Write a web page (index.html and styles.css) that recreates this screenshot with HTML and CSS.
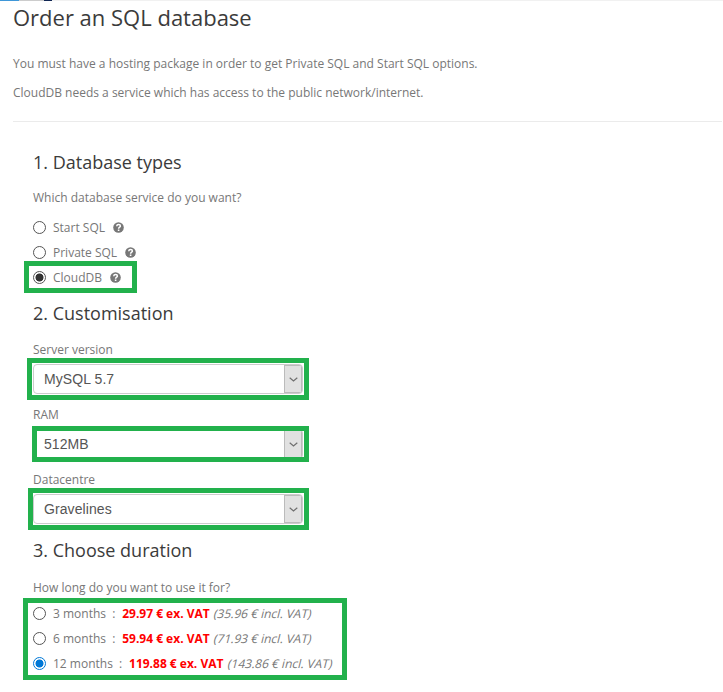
FILE: index.html
```html
<!DOCTYPE html>
<html lang="en">
<head>
<meta charset="utf-8">
<title>Order an SQL database</title>
<link rel="stylesheet" href="styles.css">
</head>
<body>
<div class="topbar"><span class="tab-blue"></span><span class="tab-grey"></span><span class="tab-navy"></span></div>
<svg width="0" height="0" class="defs">
  <symbol id="help" viewBox="0 0 11 11"><circle cx="5.5" cy="5.5" r="5.3" fill="#777"/><path d="M3.7 4.2C3.8 2.9 4.6 2.4 5.6 2.4C6.7 2.4 7.4 3.1 7.4 4C7.4 5.2 5.6 5.1 5.6 6.7" fill="none" stroke="#fff" stroke-width="1.5"/><path d="M4.8 7.5H6.4V9H4.8Z" fill="#fff"/></symbol>
  <symbol id="chevron" viewBox="0 0 9 5"><path d="M.7.7L4.5 4L8.3.7" fill="none" stroke="#707070" stroke-width="1.2"/></symbol>
</svg>
<main>
  <h1>Order an SQL database</h1>
  <p class="intro t-intro1">You must have a hosting package in order to get Private SQL and Start SQL options.</p>
  <p class="intro t-intro2">CloudDB needs a service which has access to the public network/internet.</p>
  <form>
    <section>
      <h2>1. Database types</h2>
      <p class="question">Which database service do you want?</p>
      <label class="option"><span class="radio"></span><span>Start SQL</span><svg class="help"><use href="#help"/></svg></label>
      <label class="option"><span class="radio"></span><span>Private SQL</span><svg class="help"><use href="#help"/></svg></label>
      <label class="option mark mark-cloud"><span class="radio checked"></span><span>CloudDB</span><svg class="help"><use href="#help"/></svg></label>
    </section>
    <section class="custom">
      <h2>2. Customisation</h2>
      <div class="label">Server version</div>
      <div class="field mark mark-version"><div class="select"><span>MySQL 5.7</span><i><svg class="chevron"><use href="#chevron"/></svg></i></div></div>
      <div class="label">RAM</div>
      <div class="field mark mark-ram"><div class="select"><span>512MB</span><i><svg class="chevron"><use href="#chevron"/></svg></i></div></div>
      <div class="label">Datacentre</div>
      <div class="field mark mark-dc"><div class="select"><span>Gravelines</span><i><svg class="chevron"><use href="#chevron"/></svg></i></div></div>
    </section>
    <section class="duration">
      <h2>3. Choose duration</h2>
      <p class="question">How long do you want to use it for?</p>
      <div class="mark mark-duration">
        <label class="option"><span class="radio"></span><span>3 months &nbsp;:&nbsp; <b>29.97 € ex. VAT</b> <em>(35.96 € incl. VAT)</em></span></label>
        <label class="option"><span class="radio"></span><span>6 months &nbsp;:&nbsp; <b>59.94 € ex. VAT</b> <em>(71.93 € incl. VAT)</em></span></label>
        <label class="option"><span class="radio checked blue"></span><span>12 months &nbsp;:&nbsp; <b>119.88 € ex. VAT</b> <em>(143.86 € incl. VAT)</em></span></label>
      </div>
    </section>
  </form>
</main>
</body>
</html>
```
FILE: styles.css
```css
*, *::after { box-sizing: border-box; }
body { margin: 0; min-height: 692px; background: #fff; color: #777; font: 12px/20px "Open Sans", sans-serif; }
h1, h2, p { margin: 0; font-weight: 400; }
.defs { position: absolute; }
.topbar { display: flex; height: 1px; background: #f1f1f1; }
.topbar span { height: 1px; }
.tab-blue { width: 19px; background: #3f97d8; }
.tab-grey { width: 25px; background: #ccc; }
.tab-navy { width: 8px; background: #102653; }
main { padding-left: 13px; }
h1 { height: 53px; color: #3b3b3b; font-size: 22px; line-height: 32px; }
.intro { height: 29px; }
.t-intro2 { height: 38px; }
form { margin-right: 1px; padding: 26px 0 0 20px; border-top: 1px solid #ebebeb; }
h2 { height: 40px; color: #3b3b3b; font-size: 18px; line-height: 28px; }
.question { height: 27px; }
.option { display: flex; align-items: center; width: max-content; height: 25px; white-space: nowrap; }
.radio { width: 13px; height: 13px; margin-right: 7px; border: 1px solid #555; border-radius: 50%; background: #fff; }
.checked { background: radial-gradient(circle, #333 0 3.6px, #fff 4.4px); }
.blue { border-color: #0078d7; background: radial-gradient(circle, #0078d7 0 3.6px, #fff 4.4px); }
.help { width: 11px; height: 11px; margin-left: 8px; }
.custom { padding-top: 9px; }
.label { height: 25px; line-height: 22px; }
.field { width: 270px; height: 30px; margin-bottom: 10px; }
.select { display: flex; justify-content: space-between; height: 30px; padding-left: 10px; border: 1px solid #ccc; border-radius: 4px; color: #555; font: 14px/28px "Liberation Sans", sans-serif; letter-spacing: .08px; overflow: hidden; }
.select i { display: flex; align-items: center; justify-content: center; width: 18px; border: 1px solid #bbb; background: #e1e1e1; }
.chevron { width: 9px; height: 5px; }
.duration { padding-top: 2px; }
.duration .question { height: 25px; line-height: 24px; }
b { margin-left: .5px; color: #f00; font-weight: 700; }
em { display: inline-block; margin-left: 1px; font-style: normal; transform: skewX(-14deg); }
.mark { position: relative; }
.mark::after { content: ""; position: absolute; border: 5px solid #22b14c; }
.mark-cloud::after { left: -9px; top: -4px; width: 113px; height: 32px; }
.mark-version::after { left: -6px; top: -6px; width: 282px; height: 42px; }
.mark-ram::after { left: -1px; top: -3px; width: 277px; height: 36px; }
.mark-dc::after { left: -5px; top: -6px; width: 281px; height: 42px; }
.mark-duration { width: max-content; }
.mark-duration::after { left: -10px; top: -3px; width: 324px; height: 82px; }
```
